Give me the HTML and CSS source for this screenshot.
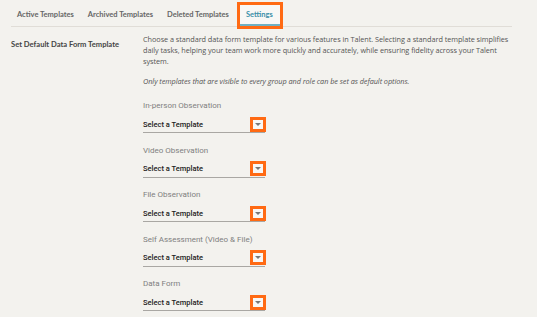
FILE: index.html
```html
<!DOCTYPE html>
<html lang="en">
<head>
  <meta charset="UTF-8" />
  <title>Data Form Templates</title>
  <link rel="stylesheet" href="styles.css">
</head>
<body>
  <div class="tabs">
    <a class="tab">Active Templates</a>
    <a class="tab">Archived Templates</a>
    <a class="tab">Deleted Templates</a>
    <a class="tab active">Settings</a>
  </div>

  <div class="settings">
    <div class="settings-title">Set Default Data Form Template</div>
    <div class="settings-body">
      <p class="intro">Choose a standard data form template for various features in Talent. Selecting a standard template simplifies daily tasks, helping your team work more quickly and accurately, while ensuring fidelity across your Talent system.</p>
      <p class="note">Only templates that are visible to every group and role can be set as default options.</p>

      <div class="field">
        <label>In-person Observation</label>
        <div class="select"><span>Select a Template</span><span class="arrow"></span></div>
      </div>
      <div class="field">
        <label>Video Observation</label>
        <div class="select"><span>Select a Template</span><span class="arrow"></span></div>
      </div>
      <div class="field">
        <label>File Observation</label>
        <div class="select"><span>Select a Template</span><span class="arrow"></span></div>
      </div>
      <div class="field">
        <label>Self Assessment (Video &amp; File)</label>
        <div class="select"><span>Select a Template</span><span class="arrow"></span></div>
      </div>
      <div class="field">
        <label>Data Form</label>
        <div class="select"><span>Select a Template</span><span class="arrow"></span></div>
      </div>
    </div>
  </div>
</body>
</html>
```

FILE: styles.css
```css
body {
  margin: 0;
  background-color: #f3f2ee;
  font-family: 'Open Sans', sans-serif;
  color: #555;
  overflow: hidden;
}
.tabs {
  display: flex;
  margin: 0 25px 0 11px;
  padding: 5px 0 0 0;
  border-bottom: 1px solid #e0ddd7;
}
.tab {
  font-family: Lato, sans-serif;
  font-weight: 700;
  font-size: 7.5px;
  color: #666;
  padding: 5px 7px 5px 6px;
  margin-right: 1px;
  line-height: 9px;
  border-bottom: 2px solid transparent;
}
.tab.active {
  color: #3c8fa8;
  background-color: #f8f7f5;
  border-bottom-color: #6fb0c2;
  outline: 3px solid #ff6a13;
  margin-left: 3px;
}
.settings {
  display: grid;
  grid-template-columns: 132px 1fr;
  padding: 0 10px 0 11px;
}
.settings-title {
  font-family: Lato, sans-serif;
  font-weight: 700;
  font-size: 7.6px;
  color: #444;
  padding-top: 12px;
}
.settings-body {
  padding-top: 7px;
}
.intro, .note {
  margin: 0;
  font-size: 7.3px;
  letter-spacing: -0.05px;
  line-height: 11px;
  color: #555;
}
.intro {
  max-width: 372px;
}
.note {
  font-style: italic;
  margin-top: 9px;
}
.field {
  margin-top: 13px;
}
.field + .field {
  margin-top: 11.5px;
}
.field label {
  display: block;
  font-family: Roboto, sans-serif;
  font-size: 8px;
  color: #808080;
  line-height: 11px;
}
.select {
  display: flex;
  align-items: center;
  justify-content: space-between;
  width: 122px;
  margin-top: 5px;
  height: 16px;
  border-bottom: 1px solid #a9a7a3;
  font-family: Roboto, sans-serif;
  font-weight: 500;
  font-size: 7.5px;
  color: #222;
}
.arrow {
  width: 10px;
  height: 9px;
  margin-right: 2px;
  background-color: #f8f7f5;
  outline: 3px solid #ff6a13;
  display: flex;
  align-items: center;
  justify-content: center;
}
.arrow::after {
  content: '';
  border-left: 3px solid transparent;
  border-right: 3px solid transparent;
  border-top: 3px solid #777;
}
```
